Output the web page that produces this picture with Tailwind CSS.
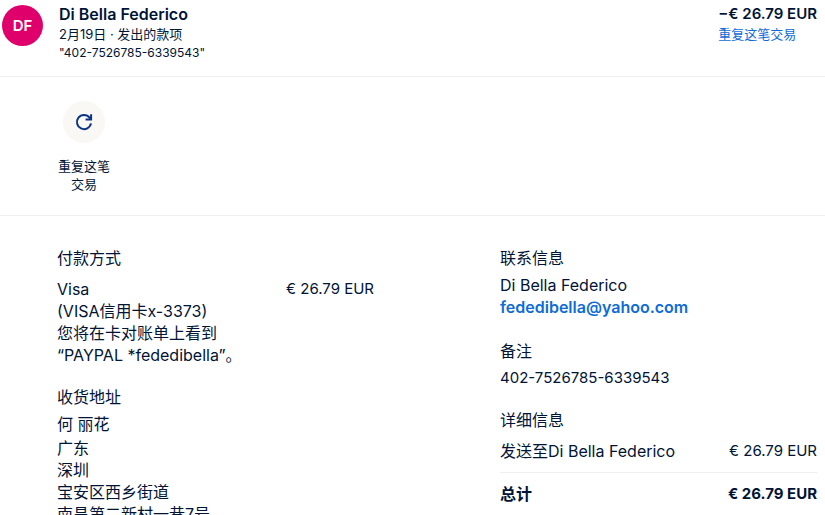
<!DOCTYPE html>
<html lang="zh-CN">
<head>
    <meta charset="UTF-8">
    <meta name="viewport" content="width=device-width, initial-scale=1.0">
    <title>交易详情</title>
    <script src="https://cdn.jsdelivr.net/npm/@tailwindcss/browser@4"></script>
</head>
<body class="bg-white h-screen overflow-hidden text-[#001435] font-['Inter','Noto_Sans_CJK_SC',sans-serif] text-[15px] leading-[22px]">
    <!-- Transaction header -->
    <header class="flex items-start border-b border-[#eeeff1] pt-1 pb-3.5 pl-0.5 pr-2">
        <div class="mt-px w-[41px] h-[41px] shrink-0 rounded-full bg-[#e0006c] text-white font-semibold flex items-center justify-center">DF</div>
        <div class="ml-4 flex-1">
            <h1 class="text-base font-semibold leading-5">Di Bella Federico</h1>
            <p class="text-[13px] leading-5">2月19日 · 发出的款项</p>
            <p class="text-[12px] leading-[18px]">"402-7526785-6339543"</p>
        </div>
        <div>
            <p class="font-semibold leading-5">−€ 26.79 EUR</p>
            <a href="#" class="block text-[13px] leading-5 text-[#0f6bd7]">重复这笔交易</a>
        </div>
    </header>

    <!-- Actions -->
    <div class="border-b border-[#eeeff1] pt-6 pb-[22px] pl-[57px]">
        <button type="button" class="w-[54px] flex flex-col items-center text-[13px] leading-[18px]">
            <span class="w-[42px] h-[42px] rounded-full bg-[#faf8f5] flex items-center justify-center">
                <svg class="w-5 h-5" viewBox="0 0 20 20" fill="none" stroke="#0a3386" stroke-width="2" aria-hidden="true">
                    <path d="M17 11.4A7.1 7.1 0 1 1 15.6 5.6L17 7.4"/>
                    <path d="M17.1 2.2V7.6H11.6"/>
                </svg>
            </span>
            <span class="mt-3.5">重复这笔<br>交易</span>
        </button>
    </div>

    <!-- Details -->
    <main class="grid grid-cols-2 gap-[126px] pt-[31px] pl-[57px] pr-2">
        <div>
            <section>
                <h2 class="text-base leading-[22px]">付款方式</h2>
                <div class="mt-[9px] flex justify-between">
                    <p class="text-base leading-[22px]">Visa<br>(VISA信用卡x-3373)<br>您将在卡对账单上看到<br>“PAYPAL *fededibella”。</p>
                    <p>€ 26.79 EUR</p>
                </div>
            </section>
            <section class="mt-5 text-base leading-[22px]">
                <h2>收货地址</h2>
                <p class="mt-[5px]">何 丽花</p>
                <p class="mt-0.5">广东<br>深圳<br>宝安区西乡街道<br>南昌第二新村一巷7号</p>
            </section>
        </div>

        <div>
            <section>
                <h2 class="text-base leading-[22px]">联系信息</h2>
                <p class="mt-[5px] text-base leading-[22px]">Di Bella Federico</p>
                <a href="mailto:fededibella@yahoo.com" class="block text-base leading-[22px] font-semibold text-[#0f6bd7]">fededibella@yahoo.com</a>
            </section>
            <section class="mt-[22px]">
                <h2 class="text-base leading-[22px]">备注</h2>
                <p class="mt-[5px]">402-7526785-6339543</p>
            </section>
            <section class="mt-5">
                <h2 class="text-base leading-[22px]">详细信息</h2>
                <div class="mt-[9px] pb-2.5 flex justify-between border-b border-[#eeeff1]">
                    <p class="text-base leading-[22px]">发送至Di Bella Federico</p>
                    <p>€ 26.79 EUR</p>
                </div>
                <div class="pt-2.5 flex justify-between font-bold">
                    <p class="text-base leading-[22px]">总计</p>
                    <p>€ 26.79 EUR</p>
                </div>
            </section>
        </div>
    </main>
</body>
</html>
